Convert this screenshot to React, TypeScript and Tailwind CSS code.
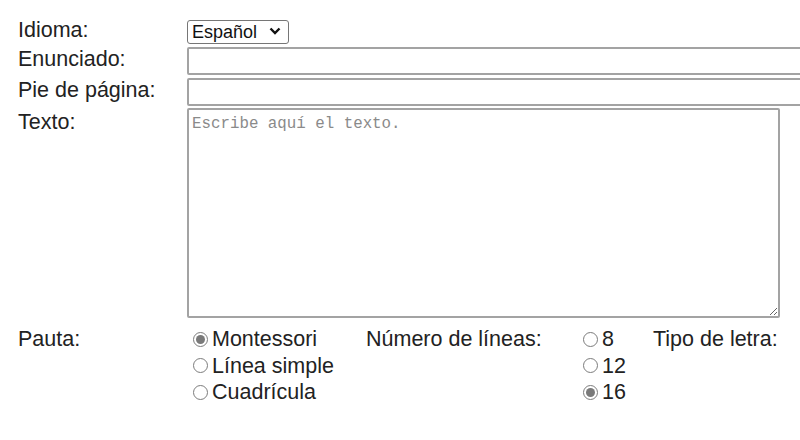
function Radio({ label, checked }: { label: string; checked?: boolean }) {
  return (
    <label className="flex items-center h-[26.5px]">
      <span className="shrink-0 ml-[6px] mr-[4px] w-[15px] h-[15px] rounded-full border-[1.5px] border-[#7c7c7c] bg-white flex items-center justify-center">
        {checked && <span className="w-[9px] h-[9px] rounded-full bg-[#7a7a7a]" />}
      </span>
      <span>{label}</span>
    </label>
  );
}

export default function App() {
  return (
    <div
      className="min-h-[440px] w-[800px] overflow-hidden bg-white text-[#222] text-[21.5px] leading-[25px] pl-[18px] pt-[19px]"
      style={{ fontFamily: '"Liberation Sans", Arial, sans-serif' }}
    >
      <div className="grid grid-cols-[169px_1fr] w-[900px]">
        <div className="h-[28px] -mt-[1px]">Idioma:</div>
        <div className="h-[28px]">
          <div className="relative w-[102px] h-[24px]">
            <select
              defaultValue="es"
              className="appearance-none w-full h-full border border-[#767676] rounded-[3px] bg-white pl-[4px] text-[18px] leading-[20px] text-[#111]"
              style={{ fontFamily: '"Liberation Sans", Arial, sans-serif' }}
            >
              <option value="es">Español</option>
            </select>
            <svg
              className="absolute right-[8px] top-[8px] pointer-events-none"
              width="12"
              height="8"
              viewBox="0 0 12 8"
            >
              <path d="M1.5 1.5 L6 6 L10.5 1.5" fill="none" stroke="#111" strokeWidth="2.4" />
            </svg>
          </div>
        </div>

        <div className="h-[31px]">Enunciado:</div>
        <div className="h-[31px]">
          <input type="text" className="block w-[700px] h-[28px] border-2 border-[#a3a3a3] rounded-[2px] bg-white" />
        </div>

        <div className="h-[30px]">Pie de página:</div>
        <div className="h-[30px]">
          <input type="text" className="block w-[700px] h-[28px] border-2 border-[#a3a3a3] rounded-[2px] bg-white" />
        </div>

        <div className="pt-[2px]">Texto:</div>
        <div>
          <textarea
            placeholder="Escribe aquí el texto."
            className="block w-[593px] h-[210px] border-2 border-[#a3a3a3] rounded-[2px] bg-white px-[3px] py-[4px] text-[15.8px] leading-[20px] text-[#222] placeholder:text-[#8a8a8a]"
            style={{ fontFamily: '"Liberation Mono", "Courier New", monospace' }}
          />
        </div>
      </div>

      <div className="grid grid-cols-[169px_179px_211px_76px_1fr] mt-[8px] leading-[26.5px]">
        <div>Pauta:</div>
        <div>
          <Radio label="Montessori" checked />
          <Radio label="Línea simple" />
          <Radio label="Cuadrícula" />
        </div>
        <div>Número de líneas:</div>
        <div>
          <Radio label="8" />
          <Radio label="12" />
          <Radio label="16" checked />
        </div>
        <div>Tipo de letra:</div>
      </div>
    </div>
  );
}
